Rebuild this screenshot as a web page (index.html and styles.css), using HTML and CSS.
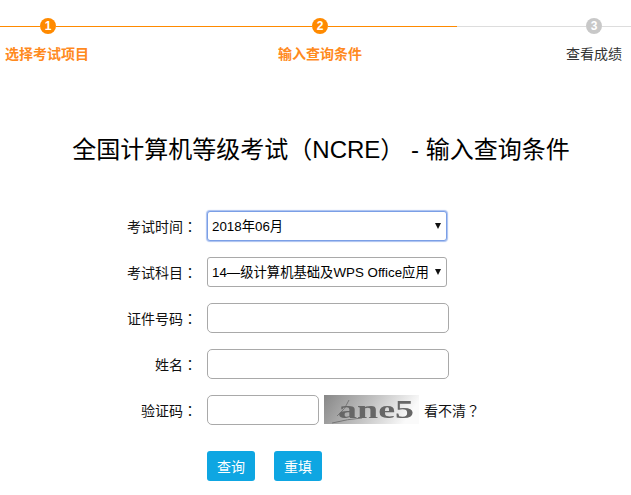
FILE: index.html
```html
<!DOCTYPE html>
<html lang="zh-CN">
<head>
    <meta charset="UTF-8">
    <title>输入查询条件</title>
    <link rel="stylesheet" href="styles.css">
</head>
<body>
    <div class="steps">
        <div class="track">
            <span class="seg on first"></span>
            <span class="dot on">1</span>
            <span class="seg on second"></span>
            <span class="dot on">2</span>
            <span class="seg on third"></span>
            <span class="seg fourth"></span>
            <span class="dot">3</span>
            <span class="seg last"></span>
        </div>
        <div class="labels">
            <span class="on">选择考试项目</span>
            <span class="on">输入查询条件</span>
            <span>查看成绩</span>
        </div>
    </div>
    <h1>全国计算机等级考试<span class="punct" lang="zh-TW">（</span>NCRE<span class="punct" lang="zh-TW">）</span> - 输入查询条件</h1>
    <form class="query">
        <div class="row">
            <label>考试时间<span class="punct" lang="zh-TW">：</span></label>
            <div class="pick focus">
                <select><option>2018年06月</option></select>
                <i class="arrow"></i>
            </div>
        </div>
        <div class="row">
            <label>考试科目<span class="punct" lang="zh-TW">：</span></label>
            <div class="pick">
                <select><option>14—级计算机基础及WPS Office应用</option></select>
                <i class="arrow"></i>
            </div>
        </div>
        <div class="row">
            <label>证件号码<span class="punct" lang="zh-TW">：</span></label>
            <input type="text">
        </div>
        <div class="row">
            <label>姓名<span class="punct" lang="zh-TW">：</span></label>
            <input type="text">
        </div>
        <div class="row">
            <label>验证码<span class="punct" lang="zh-TW">：</span></label>
            <input class="short" type="text">
            <svg class="captcha" width="95" height="29" viewBox="0 0 95 29">
                <defs>
                    <linearGradient id="fade" x1="0" y1="0" x2="1" y2="0.2">
                        <stop offset="0" stop-color="#878787"/>
                        <stop offset="0.55" stop-color="#c4c4c4"/>
                        <stop offset="1" stop-color="#fafafa"/>
                    </linearGradient>
                    <filter id="soft">
                        <feGaussianBlur stdDeviation="0.5"/>
                    </filter>
                </defs>
                <rect width="95" height="29" fill="url(#fade)"/>
                <g filter="url(#soft)">
                    <path d="M8 28 Q24 24 38 23 M25 5 Q22 14 13 21" fill="none" stroke="#777" stroke-width="1"/>
                    <text x="14" y="23" textLength="76" lengthAdjust="spacingAndGlyphs" class="captcha-text">ane5</text>
                </g>
            </svg>
            <a class="refresh">看不清<span class="punct" lang="zh-TW">？</span></a>
        </div>
        <div class="row buttons">
            <button type="button">查询</button>
            <button type="button">重填</button>
        </div>
    </form>
</body>
</html>
```

FILE: styles.css
```css
* {
    box-sizing: border-box;
}
html, body {
    overflow: hidden;
}
body {
    margin: 0;
    height: 495px;
    font-family: "Liberation Sans", "Noto Sans CJK SC", sans-serif;
    font-size: 14px;
    color: #111;
    background: #fff;
}
.punct {
    font-family: "Noto Sans CJK TC", sans-serif;
}

.steps {
    padding-top: 18px;
}
.track {
    display: flex;
    align-items: center;
    height: 16px;
}
.seg {
    height: 1px;
    background: #ddd;
}
.seg.on {
    background: #ff8a00;
}
.first { width: 40px; }
.second { width: 256px; }
.third { width: 129px; }
.fourth { width: 129px; }
.last { flex: 1; }
.dot {
    width: 16px;
    height: 16px;
    flex: none;
    border-radius: 50%;
    background: #c8c8c8;
    color: #fff;
    font-size: 12px;
    font-weight: bold;
    line-height: 16px;
    text-align: center;
}
.dot.on {
    background: #ff8a00;
}
.labels {
    display: flex;
    margin-top: 10px;
    padding-left: 5px;
    line-height: 20px;
    color: #333;
}
.labels span:nth-child(2) {
    margin-left: 189px;
}
.labels span:nth-child(3) {
    margin-left: 204px;
}
.labels .on {
    color: #ff8a1e;
    font-weight: bold;
}

h1 {
    margin: 67px 0 0;
    padding-left: 11px;
    font-size: 24px;
    font-weight: normal;
    line-height: 34px;
    color: #000;
    text-align: center;
    white-space: nowrap;
}

.query {
    margin-top: 44px;
    display: flex;
    flex-direction: column;
    gap: 16px;
}
.row {
    display: flex;
    align-items: center;
    height: 30px;
}
.row label {
    width: 197px;
    margin-right: 10px;
    text-align: right;
    white-space: nowrap;
}
.pick {
    position: relative;
    width: 240px;
    height: 30px;
}
.pick select {
    appearance: none;
    width: 100%;
    height: 100%;
    padding: 0 0 0 4px;
    font-family: inherit;
    font-size: 13.33px;
    color: #000;
    background: #fff;
    border: 1px solid #a9a9a9;
    border-radius: 3px;
}
.pick.focus select {
    border-color: #7b9fe6;
    box-shadow: 0 0 1px 1px #a9c0f0;
}
.arrow {
    position: absolute;
    top: 12px;
    right: 6px;
    border-left: 3.5px solid transparent;
    border-right: 3.5px solid transparent;
    border-top: 6px solid #111;
}
input {
    width: 242px;
    height: 30px;
    border: 1px solid #a9a9a9;
    border-radius: 5px;
    background: #fff;
}
input.short {
    width: 112px;
}
.captcha {
    margin-left: 5px;
    align-self: flex-start;
}
.captcha-text {
    font-family: "Liberation Serif", serif;
    font-size: 25px;
    font-weight: bold;
    fill: #666;
}
.refresh {
    margin-left: 5px;
    color: #111;
}
.buttons {
    margin-top: 10px;
    padding-left: 207px;
    gap: 19px;
}
button {
    width: 48px;
    height: 30px;
    padding: 0;
    border: 0;
    border-radius: 3px;
    background: #0ea6e2;
    color: #fff;
    font-family: inherit;
    font-size: 14px;
}
```
